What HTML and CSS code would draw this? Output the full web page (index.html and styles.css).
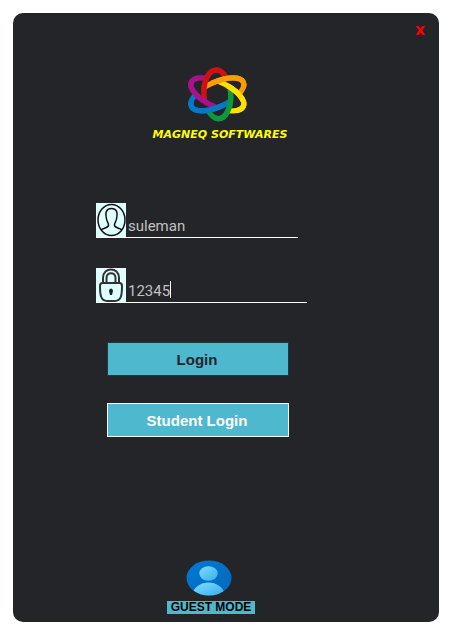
FILE: index.html
```html
<!DOCTYPE html>
<html lang="en">
<head>
<meta charset="utf-8">
<title>Magneq Softwares</title>
<link rel="stylesheet" href="styles.css">
</head>
<body>
<main class="card">
  <button class="close" type="button">X</button>
  <header class="brand">
    <svg class="logo" viewBox="0 0 222 192" aria-hidden="true">
      <defs>
        <ellipse id="tall" cx="112" cy="97" rx="40" ry="73" pathLength="100" transform="rotate(-4 112 97)"/>
        <ellipse id="down" cx="112" cy="97" rx="86" ry="37" pathLength="100" transform="rotate(25 112 97)"/>
        <ellipse id="up" cx="112" cy="97" rx="86" ry="37" pathLength="100" transform="rotate(-25 112 97)"/>
      </defs>
      <g class="ends">
        <use href="#tall" class="red"/><use href="#tall" class="green"/>
        <use href="#down" class="purple"/><use href="#down" class="yellow"/>
        <use href="#up" class="orange"/><use href="#up" class="blue"/>
      </g>
      <g class="middles">
        <use href="#tall" class="red"/><use href="#tall" class="green"/>
        <use href="#down" class="purple"/><use href="#down" class="yellow"/>
        <use href="#up" class="orange"/><use href="#up" class="blue"/>
      </g>
    </svg>
    <h1 class="name">MAGNEQ SOFTWARES</h1>
  </header>
  <form class="form">
    <div class="field">
      <label class="tile" for="user">
        <svg viewBox="0 0 30 34" role="img" aria-label="User name">
          <ellipse cx="15.500" cy="17" rx="13.500" ry="15.500"/>
          <path d="M5 27C7 25 12 25 12.500 22.500C12.700 20 11 19 10.500 16C9 9 10.500 5.500 15.500 5.500S22 9 20.500 16C20 19 18.300 20 18.500 22.500C19 25 24 25 26 27"/>
        </svg>
      </label>
      <input class="entry" id="user" type="text" value="suleman">
    </div>
    <div class="field wide">
      <label class="tile" for="pass">
        <svg class="lock" viewBox="0 0 30 34" role="img" aria-label="Password">
          <path d="M7 15V10C7 -1.500 23 -1.500 23 10V15M10.500 15V10C10.500 3.500 19.500 3.500 19.500 10V15"/>
          <path d="M6.500 15H23.500Q26 15 26 18C26 26 25.500 33 19 33H11C4.500 33 4 26 4 18Q4 15 6.500 15Z"/>
          <path class="hole" d="M13 23a2 2.500 0 1 1 4 0L16 27H14Z"/>
        </svg>
      </label>
      <span class="entry-box">
        <input class="entry" id="pass" type="text" value="12345">
        <span class="caret"></span>
      </span>
    </div>
    <button class="action" type="button">Login</button>
    <button class="action student" type="button">Student Login</button>
  </form>
  <a class="guest" href="#">
    <svg class="avatar" viewBox="0 0 46 36" aria-hidden="true">
      <defs>
        <linearGradient id="disc" x1="0" y1="0" x2="1" y2="1"><stop offset="0" stop-color="#0078d4"/><stop offset="1" stop-color="#0868b8"/></linearGradient>
        <linearGradient id="body" x1="0" y1="0" x2="1" y2="1"><stop offset="0" stop-color="#82dcff"/><stop offset="1" stop-color="#32b0ed"/></linearGradient>
        <clipPath id="round"><ellipse cx="23" cy="18" rx="22.500" ry="17.500"/></clipPath>
      </defs>
      <ellipse cx="23" cy="18" rx="22.500" ry="17.500" fill="url(#disc)"/>
      <g clip-path="url(#round)" fill="url(#body)">
        <ellipse cx="22.500" cy="13.500" rx="9.200" ry="7.300"/>
        <path d="M6 36C8 18 37 18 39 36Z"/>
      </g>
    </svg>
    <span class="guest-label">GUEST MODE</span>
  </a>
</main>
</body>
</html>
```
FILE: styles.css
```css
* { box-sizing: border-box; }
body {
  margin: 0;
  min-height: 100vh;
  padding: 13px 16px 12px 13px;
  display: flex;
  background: #fff;
  font-family: "Liberation Sans", Arial, sans-serif;
}
.card {
  flex: 1;
  display: flex;
  flex-direction: column;
  padding: 8px 8px 8px 0;
  border-radius: 10px;
  background: #242529;
}
.close {
  align-self: flex-end;
  width: 22px;
  height: 20px;
  padding: 0;
  border: 0;
  background: none;
  color: #f00;
  font: bold 13px/20px "DejaVu Sans", Verdana, sans-serif;
}
.brand {
  display: flex;
  flex-direction: column;
  align-items: center;
  margin-top: 21px;
  padding-right: 4px;
}
.logo {
  width: 74px;
  height: 64px;
  margin-right: 6px;
  fill: none;
  stroke-width: 16px;
}
.name {
  margin: 0;
  color: #ff0;
  font: italic bold 11px/18px "DejaVu Sans", Verdana, sans-serif;
}
.red { stroke: #d01012; }
.green { stroke: #0c9a3c; }
.purple { stroke: #a8138c; }
.yellow { stroke: #ffe000; }
.orange { stroke: #fa9c08; }
.blue { stroke: #0878c4; }
.ends use { stroke-dasharray: 40 60; }
.middles use { stroke-dasharray: 27 73; }
.ends .orange, .ends .blue { stroke-dasharray: 44 56; }
.middles .orange, .middles .blue { stroke-dasharray: 30 70; }
.ends .red { stroke-dashoffset: -46; }
.ends .green { stroke-dashoffset: 4; }
.ends .purple { stroke-dashoffset: -22; }
.ends .yellow { stroke-dashoffset: 28; }
.ends .orange { stroke-dashoffset: 33; }
.ends .blue { stroke-dashoffset: -17; }
.middles .red { stroke-dashoffset: -52; }
.middles .green { stroke-dashoffset: -2; }
.middles .purple { stroke-dashoffset: -29; }
.middles .yellow { stroke-dashoffset: 21; }
.middles .orange { stroke-dashoffset: 26; }
.middles .blue { stroke-dashoffset: -24; }

.form {
  display: flex;
  flex-direction: column;
  margin-top: 59px;
  padding-left: 83px;
}
.field {
  display: flex;
  width: 202px;
  height: 35px;
  margin-bottom: 30px;
  border-bottom: 1px solid #fff;
}
.wide { width: 211px; margin-bottom: 39px; }
.tile { width: 30px; height: 34px; background: #e0ffff; }
.tile svg {
  display: block;
  width: 30px;
  height: 34px;
  fill: none;
  stroke: #111;
  stroke-width: 1.5px;
}
.tile .lock { stroke: #333; stroke-width: 2px; }
.lock .hole { fill: #222; stroke: none; }
.entry {
  flex: 1;
  min-width: 0;
  padding: 12px 0 0 2px;
  border: 0;
  outline: 0;
  background: none;
  color: #c0c0c0;
  font: 15px/20px Roboto, sans-serif;
}
.entry-box { position: relative; display: flex; flex: 1; }
.caret {
  position: absolute;
  left: 44px;
  bottom: 4px;
  width: 1px;
  height: 17px;
  background: #fff;
}
.action {
  width: 182px;
  height: 34px;
  margin: 0 0 27px 11px;
  padding: 2px 2px 0 0;
  border: 1px solid #1f3a3c;
  background: #4eb8ce;
  color: #242529;
  font: bold 15px/20px "Liberation Sans", Arial, sans-serif;
}
.student { border-color: #fff; color: #fff; }
.guest {
  display: flex;
  flex-direction: column;
  align-items: center;
  align-self: center;
  gap: 5px;
  margin-top: auto;
  padding-right: 22px;
  color: #000;
  text-decoration: none;
}
.avatar { width: 46px; height: 36px; margin-right: 4px; }
.guest-label {
  padding: 0 4px;
  background: #4eb8ce;
  font: bold 12px/13px "Liberation Sans", Arial, sans-serif;
}
```
